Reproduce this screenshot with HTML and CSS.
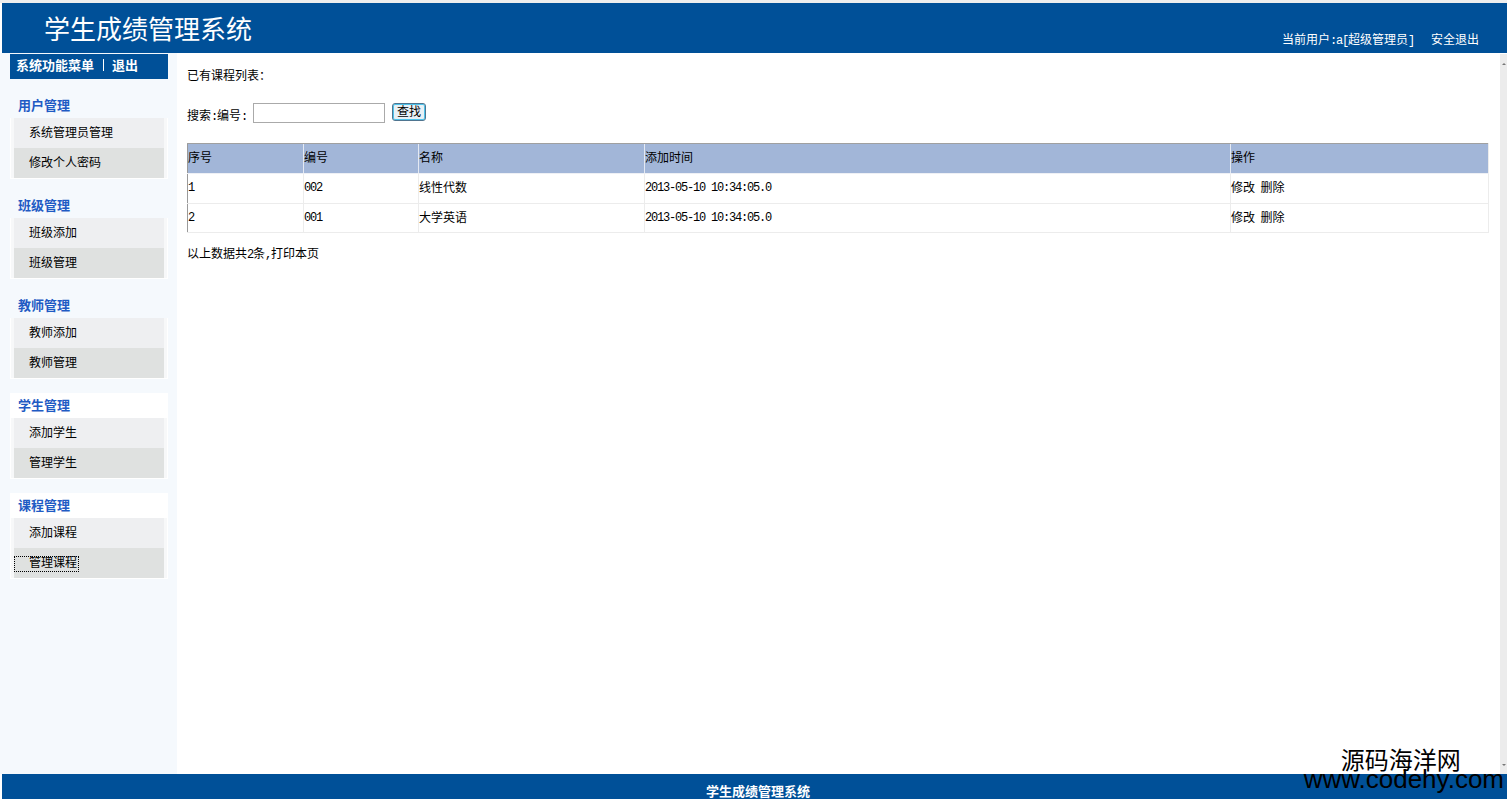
FILE: index.html
```html
<!DOCTYPE html>
<html lang="zh">
<head>
<meta charset="utf-8">
<title>学生成绩管理系统</title>
<link rel="stylesheet" href="styles.css">
</head>
<body>
<header class="top">
  <h1 class="brand">学生成绩管理系统</h1>
  <div class="userbar"><span>当前用户<span class="num">:a[</span>超级管理员<span class="num">]</span></span><span>安全退出</span></div>
</header>
<div class="middle">
  <aside class="side">
    <div class="side-head"><span>系统功能菜单</span><i class="sep"></i><span>退出</span></div>
    <section class="group"><h2>用户管理</h2><div class="items"><a>系统管理员管理</a><a>修改个人密码</a></div></section>
    <section class="group"><h2>班级管理</h2><div class="items"><a>班级添加</a><a>班级管理</a></div></section>
    <section class="group"><h2>教师管理</h2><div class="items"><a>教师添加</a><a>教师管理</a></div></section>
    <section class="group open"><h2>学生管理</h2><div class="items"><a>添加学生</a><a>管理学生</a></div></section>
    <section class="group open"><h2>课程管理</h2><div class="items"><a>添加课程</a><a class="focus">管理课程</a></div></section>
  </aside>
  <main class="main">
    <p class="caption">已有课程列表：</p>
    <form class="search"><span class="search-label">搜索<span class="num">:</span>编号<span class="num">:</span></span><input class="search-input" type="text"><button class="search-btn" type="button">查找</button></form>
    <table class="grid">
      <colgroup><col class="c1"><col class="c2"><col class="c3"><col class="c4"><col></colgroup>
      <thead><tr><th>序号</th><th>编号</th><th>名称</th><th>添加时间</th><th>操作</th></tr></thead>
      <tbody>
        <tr><td class="num">1</td><td class="num">002</td><td>线性代数</td><td class="num">2013-05-10 10:34:05.0</td><td>修改&nbsp;&nbsp;删除</td></tr>
        <tr><td class="num">2</td><td class="num">001</td><td>大学英语</td><td class="num">2013-05-10 10:34:05.0</td><td>修改&nbsp;&nbsp;删除</td></tr>
      </tbody>
    </table>
    <p class="summary">以上数据共<span class="num">2</span>条<span class="num">,</span>打印本页</p>
  </main>
  <div class="scroll"><span class="arrow up"></span><span class="arrow down"></span></div>
</div>
<footer class="bottom">学生成绩管理系统</footer>
<div class="watermark"><span class="wm-cn">源码海洋网</span><span class="wm-en">www.codehy.com</span></div>
</body>
</html>
```
FILE: styles.css
```css
* { box-sizing: border-box; }
html, body { margin: 0; height: 100%; }
body {
  width: 1507px; height: 801px; overflow: hidden; position: relative;
  background: #fff; color: #000;
  font: 12px/1 "Noto Sans CJK SC", "Liberation Sans", sans-serif;
  display: flex; flex-direction: column;
  padding-top: 3px;
  box-shadow: inset 0 3px 0 #eeeeee;
}
.num { font-family: "Liberation Mono", monospace; font-size: 12px; letter-spacing: -1.2px; }
.top {
  height: 50px; margin-left: 2px; background: #005098; color: #fff;
  display: flex; justify-content: space-between; flex: none;
}
.brand { margin: 0 0 0 42px; font-size: 26px; line-height: 50px; font-weight: 400; font-family: "Noto Sans CJK SC", serif; }
.userbar { display: flex; gap: 17px; padding: 29px 28px 0 0; font-size: 12px; line-height: 14px; }
.middle { flex: 1; display: flex; min-height: 0; }
.side { width: 177px; background: #f5f9fd; padding: 1px 9px 0 10px; flex: none; }
.side-head {
  width: 158px; height: 25px; background: #005098; color: #fff; font-weight: 700; font-size: 13px;
  display: flex; align-items: center; padding: 0 0 4px 6px;
}
.sep { width: 1px; height: 12px; background: #fff; margin: 0 8px 0 9px; }
.group { width: 158px; margin-top: 14px; }
.group h2 {
  margin: 0; height: 25px; padding: 5px 0 0 8px; font-size: 13px; line-height: 14px; font-weight: 700; color: #1f5bc4;
}
.group.open { background: #fff; }
.items { background: #f7f8f9; border: solid #fff; border-width: 0 1px 1px; padding: 0 3px; display: flex; flex-direction: column; }
.items a { height: 30px; display: block; padding-left: 15px; line-height: 28px; font-size: 12px; background: #eeeff1; color: #000; }
.items a + a { background: #dfe1e0; }
.items a.focus { position: relative; }
.items a.focus::before {
  content: ""; position: absolute; left: 0; top: 8px; width: 63px; height: 14px; border: 1px dotted #000;
}
.main { flex: 1; padding: 0 12px 0 10px; min-width: 0; }
.caption { margin: 15px 0 0; line-height: 14px; }
.search { display: flex; align-items: center; margin-top: 21px; height: 20px; }
.search-label { width: 66px; line-height: 14px; padding-top: 5px; }
.search-input { width: 132px; height: 20px; padding: 0; border: 1px solid #aaaaaa; background: #fff; }
.search-btn {
  margin-left: 7px; width: 34px; height: 18px; padding: 0 0 2px; margin-top: -3px;
  border: 1px solid #4f7590; border-radius: 3px; background: #e8f1f6; box-shadow: inset 0 0 0 1px #4fc3ea;
  font: 12px/1 "Noto Sans CJK SC", sans-serif; color: #000;
}
.grid { width: 1302px; margin-top: 20px; border-collapse: collapse; table-layout: fixed; }
.c1 { width: 116px; } .c2 { width: 115px; } .c3 { width: 226px; } .c4 { width: 586px; }
.grid th, .grid td { padding: 0 0 4px; text-align: left; font-weight: 400; white-space: nowrap; }
.grid td.num { padding-bottom: 1px; }
.grid th { height: 30px; background: #a2b6d8; border-top: 1px solid #a0a0a0; border-bottom: 1px solid #eef0f5; border-left: 1px solid #e4e9f3; }
.grid td { height: 30px; border-bottom: 1px solid #ececec; border-left: 1px solid #ececec; }
.grid tbody tr:last-child td { height: 29px; padding-bottom: 2px; }
.grid tbody tr:last-child td.num { padding-bottom: 0; }
.grid th:first-child, .grid td:first-child { border-left: 1px solid #9a9a9a; }
.grid th:last-child, .grid td:last-child { border-right: 1px solid #ececec; }
.summary { margin: 13px 0 0; line-height: 14px; }
.scroll { width: 7px; background: #ececec; flex: none; position: relative; margin-top: 1px; }
.arrow { position: absolute; left: 2px; width: 0; height: 0; border-left: 2px solid transparent; border-right: 2px solid transparent; }
.up { top: 9px; border-bottom: 2px solid #777; }
.down { bottom: 8px; border-top: 2px solid #777; }
.bottom {
  height: 25px; margin: 0 0 2px 2px; background: #005098; color: #fff; flex: none;
  text-align: center; font-weight: 700; font-size: 13px; line-height: 34px; overflow: hidden; padding-left: 7px;
}
.watermark { position: absolute; right: 3px; top: 748px; display: flex; flex-direction: column; align-items: center; color: #000; font-weight: 400; }
.wm-cn { font-size: 24px; line-height: 22px; margin-right: 6px; }
.wm-en { font: 26px/18px "Liberation Sans", sans-serif; }
```
